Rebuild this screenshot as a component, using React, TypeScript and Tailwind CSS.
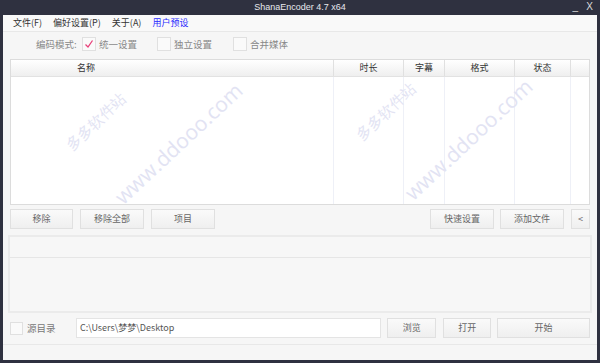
import React from 'react';

const cn = "font-['Noto_Sans_CJK_SC','Microsoft_YaHei',sans-serif]";

function Btn({ label, className = '' }: { label: string; className?: string }) {
  return (
    <button
      className={`flex h-[20px] items-center justify-center border border-[#e0e0e0] bg-gradient-to-b from-[#fafafa] to-[#efefef] text-[9px] text-[#666] ${className}`}
    >
      {label}
    </button>
  );
}

function Check({ checked, label, className = '' }: { checked?: boolean; label: string; className?: string }) {
  return (
    <div className={`flex items-center gap-[3px] ${className}`}>
      <span className="flex size-[14px] items-center justify-center border border-[#e0e0e0] bg-[#fafafa]">
        {checked && (
          <svg width="10" height="10" viewBox="0 0 10 10">
            <path d="M1.5 5.5 L4 8 L8.5 1.5" fill="none" stroke="#e8407a" strokeWidth="1.3" />
          </svg>
        )}
      </span>
      <span className="whitespace-nowrap text-[9.5px] text-[#888]">{label}</span>
    </div>
  );
}

function Watermark({ x, y, text, size }: { x: number; y: number; text: string; size: number }) {
  return (
    <span
      className="pointer-events-none absolute -rotate-[43deg] whitespace-nowrap font-['Open_Sans',sans-serif] text-[#e2e3f3]"
      style={{ left: x, top: y, fontSize: size }}
    >
      {text}
    </span>
  );
}

const cols = [
  { w: 'w-[70px]', label: '时长' },
  { w: 'w-[41px]', label: '字幕' },
  { w: 'w-[70px]', label: '格式' },
  { w: 'w-[56px]', label: '状态' },
  { w: 'w-[19px]', label: '' },
];

export default function App() {
  return (
    <div className={`relative flex h-[363px] w-[600px] flex-col overflow-hidden bg-[#2f3140] ${cn}`}>
      {/* title bar */}
      <div className="relative flex h-[15px] shrink-0 items-center justify-center">
        <span className="font-['Liberation_Sans',sans-serif] text-[9px] text-[#e8e8ee]">ShanaEncoder 4.7 x64</span>
        <span className="absolute right-[22px] top-[2px] font-['Liberation_Sans',sans-serif] text-[10px] leading-[10px] text-[#ddd]">_</span>
        <span className="absolute right-[7px] top-[2px] font-['Liberation_Sans',sans-serif] text-[10px] leading-[10px] text-[#ddd]">X</span>
      </div>

      <div className="mx-[3px] mb-[3px] flex flex-1 flex-col bg-[#f6f6f6]">
        {/* menu */}
        <div className="flex h-[17px] shrink-0 items-center gap-[11px] border-b border-[#e8e8e8] bg-[#f9f9f9] pl-[10px] text-[9px] text-[#333]">
          <span>文件(F)</span>
          <span>偏好设置(P)</span>
          <span>关于(A)</span>
          <span className="text-[#2a2aff]">用户预设</span>
        </div>

        {/* mode row */}
        <div className="flex h-[24px] shrink-0 items-center pl-[33px]">
          <span className="mr-[4px] w-[42px] whitespace-nowrap text-[9.5px] text-[#888]">编码模式:</span>
          <Check checked label="统一设置" className="w-[75px]" />
          <Check label="独立设置" className="w-[76px]" />
          <Check label="合并媒体" />
        </div>

        {/* table */}
        <div className="mx-[7px] mt-[3px] flex h-[146px] shrink-0 flex-col border border-[#dcdcdc] bg-white">
          <div className="flex h-[17px] shrink-0 border-b border-[#e2e2e2] bg-gradient-to-b from-white to-[#efefef] text-[9px] text-[#333]">
            <div className="flex flex-1 items-center pl-[66px]">名称</div>
            {cols.map((c, i) => (
              <div key={i} className={`flex ${c.w} items-center justify-center border-l border-[#e0e0e0]`}>
                {c.label}
              </div>
            ))}
          </div>
          <div className="flex flex-1">
            <div className="flex-1" />
            {cols.map((c, i) => (
              <div key={i} className={`${c.w} border-l border-[#eef0f7]`} />
            ))}
          </div>
        </div>

        {/* buttons row */}
        <div className="mt-[3px] flex h-[22px] shrink-0 items-center px-[7px]">
          <Btn label="移除" className="w-[63px]" />
          <Btn label="移除全部" className="ml-[7px] w-[64px]" />
          <Btn label="项目" className="ml-[7px] w-[64px]" />
          <div className="flex-1" />
          <Btn label="快速设置" className="w-[64px]" />
          <Btn label="添加文件" className="ml-[6px] w-[64px]" />
          <Btn label="<" className="ml-[7px] w-[19px]" />
        </div>

        {/* log panel */}
        <div className="mx-[5px] mt-[5px] flex h-[78px] shrink-0 flex-col border-[2px] border-[#ebebeb] bg-[#f7f7f7]">
          <div className="h-[21px] border-b border-[#e6e6e6]" />
        </div>

        {/* bottom row */}
        <div className="mt-[4px] flex h-[22px] shrink-0 items-center px-[7px]">
          <span className="size-[13px] shrink-0 border border-[#e0e0e0] bg-[#fafafa]" />
          <span className="ml-[4px] w-[45px] whitespace-nowrap text-[9.5px] text-[#777]">源目录</span>
          <div className="ml-[4px] flex h-[20px] w-[306px] items-center border border-[#e4e4e4] bg-white pl-[3px] text-[9px] text-[#555]">
            C:\Users\梦梦\Desktop
          </div>
          <Btn label="浏览" className="ml-[6px] w-[49px]" />
          <Btn label="打开" className="ml-[7px] w-[48px]" />
          <Btn label="开始" className="ml-[6px] w-[93px]" />
        </div>
        <div className="mt-[5px] border-t border-[#e8e8e8]" />
      </div>

      {/* watermarks */}
      <Watermark x={58} y={110} text="多多软件站" size={15} />
      <Watermark x={96} y={128} text="www.ddooo.com" size={21} />
      <Watermark x={348} y={100} text="多多软件站" size={15} />
      <Watermark x={386} y={124} text="www.ddooo.com" size={21} />
    </div>
  );
}
